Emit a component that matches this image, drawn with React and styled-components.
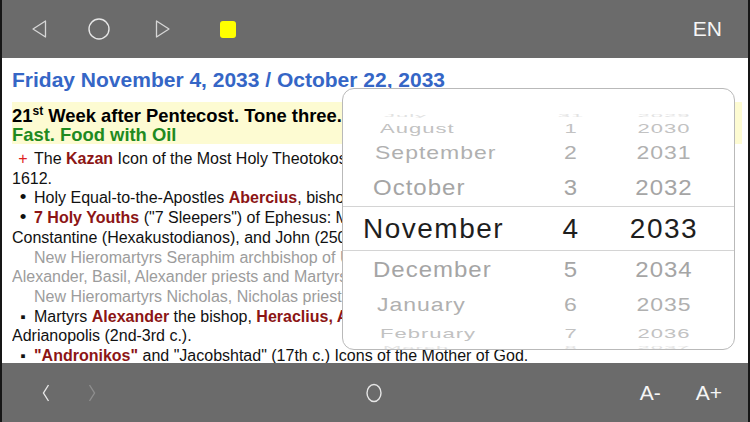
import styled, { createGlobalStyle } from "styled-components";

const GlobalStyle = createGlobalStyle`
    html, body {
        margin: 0;
        padding: 0;
        background: #fff;
    }
    body {
        font-family: "Liberation Sans", Arial, sans-serif;
    }
`;

const Screen = styled.div`
    width: 750px;
    height: 422px;
    box-sizing: border-box;
    border-left: 2px solid #161616;
    border-right: 2px solid #161616;
    display: flex;
    flex-direction: column;
    overflow: hidden;
    background: #fff;
`;

const Bar = styled.div`
    height: ${({ $h }) => $h}px;
    flex: none;
    background: #6b6b6b;
    display: flex;
    align-items: center;
    color: #f4f4f4;
`;

const Slot = styled.span`
    display: inline-flex;
    align-items: center;
    margin-left: ${({ $ml }) => $ml || 0}px;
`;

const Spacer = styled.div`
    flex: 1;
`;

const BarLabel = styled.span`
    font-size: 21px;
    line-height: 24px;
    color: #f6f6f6;
    margin-left: ${({ $ml }) => $ml || 0}px;
    margin-right: ${({ $mr }) => $mr || 0}px;
`;

const YellowKey = styled.span`
    width: 16px;
    height: 17px;
    border-radius: 3px;
    background: #ffff00;
    display: inline-block;
`;

const Content = styled.div`
    flex: 1;
    position: relative;
    overflow: hidden;
    padding: 10px 6px 0 10px;
`;

const Sheet = styled.div`
    overflow: hidden;
    height: 100%;
`;

const Title = styled.div`
    font-size: 21px;
    line-height: 24px;
    font-weight: bold;
    color: #3566c6;
    white-space: nowrap;
`;

const Band = styled.div`
    margin-top: 10px;
    padding: 4px 0 0;
    height: 38px;
    background: #fdfbd2;
    font-size: 18.4px;
    line-height: 19px;
    font-weight: bold;
    white-space: nowrap;
`;

const BandLine = styled.div`
    color: ${({ $c }) => $c || "#000"};
    sup {
        font-size: 12px;
        line-height: 0;
        vertical-align: 7px;
    }
`;

const List = styled.div`
    margin-top: 5px;
    font-size: 16px;
    line-height: 19.7px;
    color: #111;
`;

const Item = styled.div`
    white-space: nowrap;
    color: ${({ $muted }) => ($muted ? "#9c9c9c" : "#111")};
`;

const Marker = styled.span`
    display: inline-block;
    width: 22px;
    text-align: center;
    line-height: 0;
    color: ${({ $red }) => ($red ? "#e02020" : "#111")};
    font-size: ${({ $size }) => $size || 16}px;
`;

const Name = styled.b`
    color: #8c1515;
`;

const Popover = styled.div`
    position: absolute;
    top: 30px;
    left: 340px;
    width: 393px;
    height: 262px;
    box-sizing: border-box;
    border: 1px solid #b9b9b9;
    border-radius: 12px;
    background: #fff;
    overflow: hidden;
    padding-top: 16px;
`;

const Row = styled.div`
    height: ${({ $h }) => $h}px;
    box-sizing: border-box;
    display: grid;
    grid-template-columns: 190px 76px 110px;
    align-items: center;
    color: ${({ $c }) => $c};
    font-size: ${({ $size }) => $size}px;
    letter-spacing: ${({ $sel }) => ($sel ? 1.5 : 1)}px;
    border-top: ${({ $sel }) => ($sel ? "1px solid #d4d4d4" : "none")};
    border-bottom: ${({ $sel }) => ($sel ? "1px solid #d4d4d4" : "none")};
    white-space: nowrap;
`;

const Cell = styled.div`
    line-height: 1;
    text-align: ${({ $left }) => ($left ? "left" : "center")};
    padding-left: ${({ $indent }) => $indent || 0}px;
    transform: scaleY(${({ $sy }) => $sy});
`;

const rows = [
    { m: "July", d: "31", y: "2029", h: 13, size: 22, sy: 0.2, c: "#e2e2e2", indent: 41 },
    { m: "August", d: "1", y: "2030", h: 18, size: 22, sy: 0.55, c: "#c2c2c2", indent: 37 },
    { m: "September", d: "2", y: "2031", h: 32, size: 23, sy: 0.8, c: "#b0b0b0", indent: 32 },
    { m: "October", d: "3", y: "2032", h: 38, size: 24, sy: 0.95, c: "#a5a5a5", indent: 30 },
    { m: "November", d: "4", y: "2033", h: 45, size: 28, sy: 1, c: "#1e1e1e", indent: 20, sel: true },
    { m: "December", d: "5", y: "2034", h: 36, size: 24, sy: 0.95, c: "#a5a5a5", indent: 30 },
    { m: "January", d: "6", y: "2035", h: 36, size: 23, sy: 0.8, c: "#b0b0b0", indent: 34 },
    { m: "February", d: "7", y: "2036", h: 14, size: 22, sy: 0.55, c: "#c2c2c2", indent: 37 },
    { m: "March", d: "8", y: "2037", h: 14, size: 22, sy: 0.2, c: "#e2e2e2", indent: 40 },
];

const Triangle = ({ dir }) => (
    <svg width="15" height="18" viewBox="0 0 15 18">
        <polygon
            points={dir === "left" ? "13.5,1 1,9 13.5,17" : "1.5,1 14,9 1.5,17"}
            fill="none"
            stroke="#d6d6d6"
            strokeWidth="1.3"
            strokeLinejoin="round"
        />
    </svg>
);

const Ring = ({ w, h, rx, ry }) => (
    <svg width={w} height={h} viewBox={`0 0 ${w} ${h}`}>
        <ellipse cx={w / 2} cy={h / 2} rx={rx} ry={ry} fill="none" stroke="#e6e6e6" strokeWidth="1.4" />
    </svg>
);

const Chevron = ({ dir, color }) => (
    <svg width="8" height="18" viewBox="0 0 8 18">
        <polyline
            points={dir === "left" ? "6.5,1 1.5,9 6.5,17" : "1.5,1 6.5,9 1.5,17"}
            fill="none"
            stroke={color}
            strokeWidth="1.4"
        />
    </svg>
);

const DatePicker = () => (
    <Popover>
        {rows.map((r) => (
            <Row key={r.m} $h={r.h} $c={r.c} $size={r.size} $sel={r.sel}>
                <Cell $left $indent={r.indent} $sy={r.sy}>
                    {r.m}
                </Cell>
                <Cell $sy={r.sy}>{r.d}</Cell>
                <Cell $sy={r.sy}>{r.y}</Cell>
            </Row>
        ))}
    </Popover>
);

export default function App() {
    return (
        <>
            <GlobalStyle />
            <Screen>
                <Bar $h={58}>
                    <Slot $ml={30}>
                        <Triangle dir="left" />
                    </Slot>
                    <Slot $ml={40}>
                        <Ring w={24} h={24} rx={10} ry={10} />
                    </Slot>
                    <Slot $ml={44}>
                        <Triangle dir="right" />
                    </Slot>
                    <Slot $ml={50}>
                        <YellowKey />
                    </Slot>
                    <Spacer />
                    <BarLabel $mr={26}>EN</BarLabel>
                </Bar>

                <Content>
                    <Sheet>
                        <Title>Friday November 4, 2033 / October 22, 2033</Title>
                        <Band>
                            <BandLine>
                                21<sup>st</sup> Week after Pentecost. Tone three.
                            </BandLine>
                            <BandLine $c="#1f8a1f">Fast. Food with Oil</BandLine>
                        </Band>
                        <List>
                            <Item>
                                <Marker $red>+</Marker>The <Name>Kazan</Name> Icon of the Most Holy Theotokos (in
                                thanksgiving for the deliverance of Moscow in
                                <br />
                                1612.
                            </Item>
                            <Item>
                                <Marker $size={19}>•</Marker>Holy Equal-to-the-Apostles <Name>Abercius</Name>,
                                bishop and wonder-worker of Hierapolis (ca. 167).
                            </Item>
                            <Item>
                                <Marker $size={19}>•</Marker>
                                <Name>7 Holy Youths</Name> ("7 Sleepers") of Ephesus: Maximilian, Iamblichus,
                                Martinian, Dionysius, Antoninus,
                                <br />
                                Constantine (Hexakustodianos), and John (250 and ca. 408).
                            </Item>
                            <Item $muted>
                                <Marker />New Hieromartyrs Seraphim archbishop of Uglich, Basil, Vladimir,
                                Nicholas, Vladimir,
                                <br />
                                Alexander, Basil, Alexander priests and Martyrs Nicholas and Basil (1937).
                            </Item>
                            <Item $muted>
                                <Marker />New Hieromartyrs Nicholas, Nicholas priests (1938).
                            </Item>
                            <Item>
                                <Marker $size={15}>▪</Marker>Martyrs <Name>Alexander</Name> the bishop,{" "}
                                <Name>Heraclius, Anna, Elizabeth, Theodota,</Name> and <Name>Glyceria</Name>
                                <br />
                                Adrianopolis (2nd-3rd c.).
                            </Item>
                            <Item>
                                <Marker $size={15}>▪</Marker>
                                <Name>"Andronikos"</Name> and "Jacobshtad" (17th c.) Icons of the Mother of God.
                            </Item>
                        </List>
                    </Sheet>
                    <DatePicker />
                </Content>

                <Bar $h={59}>
                    <Slot $ml={40}>
                        <Chevron dir="left" color="#e8e8e8" />
                    </Slot>
                    <Slot $ml={38}>
                        <Chevron dir="right" color="#8e8e8e" />
                    </Slot>
                    <Slot $ml={269}>
                        <Ring w={18} h={20} rx={7} ry={8.5} />
                    </Slot>
                    <Spacer />
                    <BarLabel>A-</BarLabel>
                    <BarLabel $ml={35} $mr={26}>
                        A+
                    </BarLabel>
                </Bar>
            </Screen>
        </>
    );
}
